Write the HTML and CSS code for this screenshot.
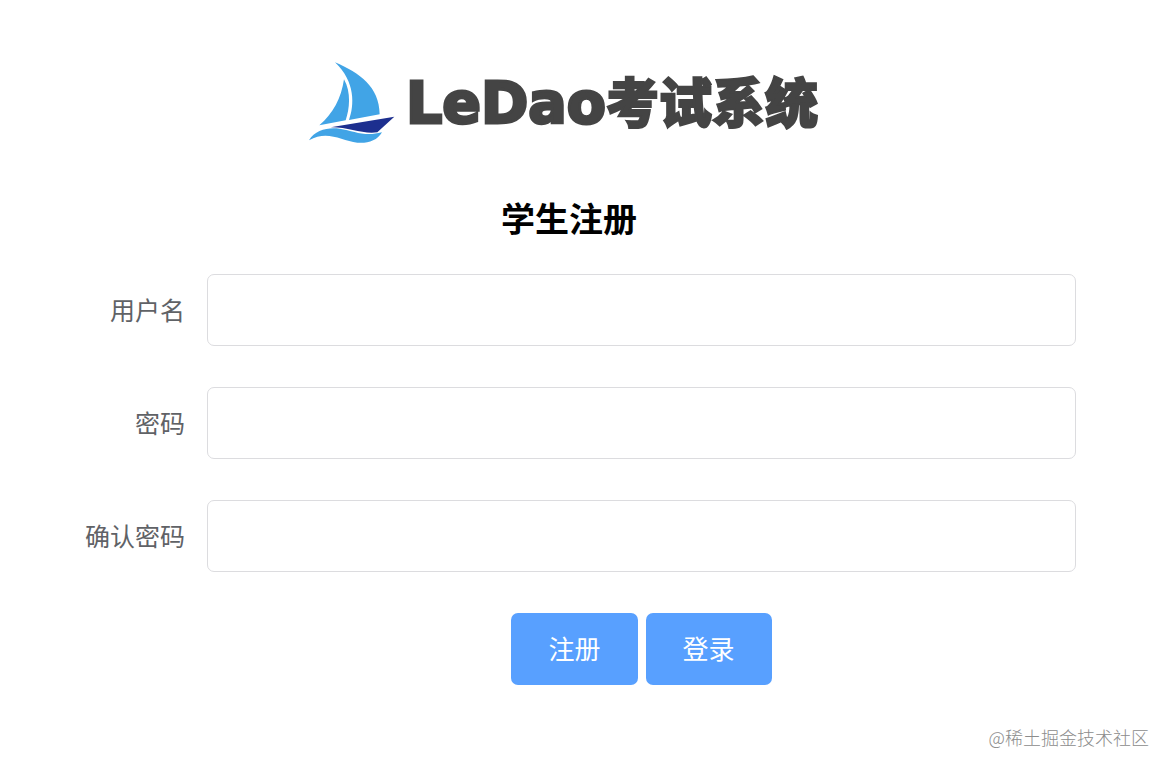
FILE: index.html
```html
<!DOCTYPE html>
<html lang="zh-CN">
<head>
<meta charset="utf-8">
<meta name="viewport" content="width=device-width, initial-scale=1">
<title>LeDao考试系统 - 学生注册</title>
<link rel="stylesheet" href="styles.css">
</head>
<body>
<main class="page">
  <header class="brand">
    <svg class="brand-mark" viewBox="0 0 318 300" aria-hidden="true">
      <path fill="#41a4e6" d="M105 40C180 72 238 114 239 196L147 213C163 170 167 98 105 40Z"/>
      <path fill="#41a4e6" d="M132 91C154 130 149 180 137 214L58 229C99 194 124 147 132 91Z"/>
      <path fill="#1d2f8f" d="M283 203L232 250C190 257 145 234 92 235Z"/>
      <path fill="#41a4e6" d="M27 274C45 242 86 234 119 239C163 246 193 264 246 250C232 276 200 284 172 281C124 275 82 242 27 274Z"/>
    </svg>
    <p class="brand-name"><span class="brand-latin">LeDao</span><span class="brand-cjk">考试系统</span></p>
  </header>
  <h1 class="title">学生注册</h1>
  <form class="form">
    <label class="label" for="username">用户名</label>
    <input class="field" id="username" name="username" type="text">
    <label class="label" for="password">密码</label>
    <input class="field" id="password" name="password" type="password">
    <label class="label" for="confirm">确认密码</label>
    <input class="field" id="confirm" name="confirm" type="password">
    <div class="actions">
      <button class="button" type="submit">注册</button>
      <button class="button" type="button">登录</button>
    </div>
  </form>
</main>
<p class="watermark">@稀土掘金技术社区</p>
</body>
</html>
```
FILE: styles.css
```css
* {
  box-sizing: border-box;
}

body {
  position: relative;
  margin: 0;
  min-height: 100vh;
  background: #fff;
  color: #000;
  font-family: "Noto Sans CJK SC", sans-serif;
}

.page {
  padding: 49px 94px 0 62px;
}

.brand {
  display: flex;
  justify-content: center;
  height: 100px;
  padding-right: 20px;
}

.brand-mark {
  flex: none;
  width: 106px;
  height: 100px;
}

.brand-name {
  display: flex;
  align-items: baseline;
  margin: 0;
  color: #444;
  line-height: 102px;
  white-space: nowrap;
}

.brand-latin {
  font-family: "DejaVu Sans", sans-serif;
  font-size: 57px;
  font-weight: 700;
  -webkit-text-stroke: 3px #444;
}

.brand-cjk {
  font-size: 53px;
  font-weight: 900;
  -webkit-text-stroke: 2px #444;
}

.title {
  margin: 44px 0 31px;
  font-size: 34px;
  font-weight: 700;
  line-height: 50px;
  text-align: center;
}

.form {
  display: grid;
  grid-template-columns: 123px 1fr;
  gap: 41px 22px;
  align-items: start;
}

.label {
  color: #606266;
  font-size: 25px;
  line-height: 70px;
  text-align: right;
  white-space: nowrap;
}

.field {
  width: 100%;
  height: 72px;
  padding: 0 26px;
  border: 1px solid #dcdcdf;
  border-radius: 7px;
  background: #fff;
  color: #606266;
  font: inherit;
  font-size: 25px;
}

.actions {
  grid-column: 2;
  display: flex;
  justify-content: center;
  gap: 8px;
}

.button {
  padding: 0 37px 2px;
  border: 0;
  border-radius: 7px;
  background: #58a0ff;
  color: #fff;
  font: inherit;
  font-size: 26px;
  line-height: 70px;
}

.watermark {
  position: absolute;
  right: 21px;
  bottom: 19px;
  margin: 0;
  color: #8c8c8c;
  font-size: 18px;
  font-weight: 300;
  line-height: 28px;
}
```
